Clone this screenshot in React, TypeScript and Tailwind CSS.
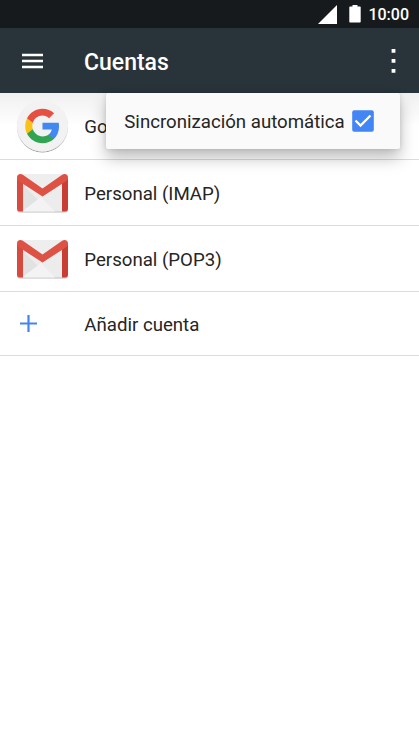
import type { ReactNode } from 'react';

function GoogleIcon() {
  return (
    <svg width="56" height="58" viewBox="0 0 56 58" className="block">
      <defs>
        <filter id="disc" x="-20%" y="-20%" width="140%" height="140%">
          <feDropShadow dx="0" dy="1" stdDeviation="0.7" floodOpacity="0.4" />
        </filter>
      </defs>
      <circle cx="28.5" cy="28.8" r="25.6" fill="#f2f2f2" filter="url(#disc)" />
      <g transform="translate(11.2 11.7) scale(1.44)">
        <path fill="#4387f0" d="M23.5 12.27c0-.85-.08-1.67-.22-2.45H12v4.64h6.45c-.28 1.5-1.13 2.77-2.4 3.62v3.01h3.88c2.27-2.09 3.57-5.17 3.57-8.82z" />
        <path fill="#31a552" d="M12 24c3.24 0 5.95-1.07 7.93-2.91l-3.88-3.01c-1.07.72-2.45 1.15-4.05 1.15-3.12 0-5.77-2.11-6.71-4.95H1.28v3.11C3.25 21.3 7.31 24 12 24z" />
        <path fill="#fbc116" d="M5.29 14.28A7.2 7.2 0 0 1 4.91 12c0-.79.14-1.56.38-2.28V6.61H1.28A12 12 0 0 0 0 12c0 1.94.46 3.77 1.28 5.39z" />
        <path fill="#e65043" d="M12 4.77c1.76 0 3.34.6 4.58 1.79l3.44-3.44C17.94 1.19 15.24 0 12 0 7.31 0 3.25 2.7 1.28 6.61l4.01 3.11C6.23 6.88 8.88 4.77 12 4.77z" />
      </g>
    </svg>
  );
}

function MailIcon() {
  return (
    <svg width="56" height="42" viewBox="0 0 56 42" className="block">
      <rect x="3" y="3" width="51" height="37.6" rx="3" fill="#bdbdbd" />
      <rect x="3" y="2" width="51" height="37.6" rx="3" fill="#ececec" />
      <path d="M8 39.6V12L24 28z" fill="#e2e2e2" />
      <path d="M8 39.6 27 25 41 39.6z" fill="#f3f3f3" />
      <path d="M8 2H49L28.5 17z" fill="#eeeeee" />
      <path d="M3 6v30.6a3 3 0 0 0 3 3h3V11z" fill="#d64a40" />
      <path d="M54 6v30.6a3 3 0 0 1-3 3h-3V11z" fill="#c93e34" />
      <path d="M3 5.5C3 2.2 6.2.9 8.8 2.7L28.5 16.4 48.2 2.7C50.8.9 54 2.2 54 5.5c0 1.7-.7 2.8-2 3.7L28.5 24.6 5 9.2C3.7 8.3 3 7.2 3 5.5z" fill="#de5145" />
    </svg>
  );
}

function PlusIcon() {
  return (
    <svg width="56" height="18" viewBox="0 0 56 18" className="block">
      <path d="M6 8.5h17M14.5 0v17" stroke="#4384f3" strokeWidth="2.2" />
    </svg>
  );
}

type RowProps = { icon: ReactNode; label: string; className: string };

function Row({ icon, label, className }: RowProps) {
  return (
    <div className={`flex items-center border-b border-[#dcdcdc] pl-[14px] ${className}`}>
      <div className="w-[70.3px] shrink-0">{icon}</div>
      <span className="pt-[2px] text-[18.65px] leading-6 whitespace-nowrap text-[#252525]">{label}</span>
    </div>
  );
}

const accounts: RowProps[] = [
  { icon: <GoogleIcon />, label: 'Google', className: 'h-[67px] bg-linear-to-b from-[#f0f0f0] to-white to-50%' },
  { icon: <MailIcon />, label: 'Personal (IMAP)', className: 'h-[66px]' },
  { icon: <MailIcon />, label: 'Personal (POP3)', className: 'h-[66px]' },
  { icon: <PlusIcon />, label: 'Añadir cuenta', className: 'h-[64px]' },
];

export default function App() {
  return (
    <div className="flex h-screen flex-col overflow-hidden bg-white font-['Roboto',sans-serif]">
      <div className="flex h-7 shrink-0 items-center justify-end bg-[#161a1c] pr-[10px] text-white">
        <svg width="19" height="19" viewBox="0 0 19 19" className="mr-[12px]">
          <path d="M19 0V19H0z" fill="currentColor" />
        </svg>
        <svg width="12" height="18" viewBox="0 0 12 18" className="mr-[7px]">
          <path d="M3.5 0h5v1.5H11q.7 0 .7.7v14.6q0 .7-.7.7H1q-.7 0-.7-.7V2.2q0-.7.7-.7h2.5z" fill="currentColor" />
        </svg>
        <span className="pt-[2px] text-[16px] leading-5 font-medium">10:00</span>
      </div>

      <header className="relative z-10 flex h-[65px] shrink-0 items-center bg-[#29343a] pr-[23px] pl-[22px] text-white">
        <svg width="21" height="16" viewBox="0 0 21 16">
          <path d="M0 2h21M0 8h21M0 14h21" stroke="currentColor" strokeWidth="2.3" />
        </svg>
        <h1 className="ml-[41px] flex-1 pt-[4px] text-[23px] leading-7 font-medium">Cuentas</h1>
        <svg width="5" height="24" viewBox="0 0 5 24">
          <path d="M.6 0h3.8v3.8H.6zM.6 10h3.8v3.8H.6zM.6 20h3.8v3.8H.6z" fill="currentColor" />
        </svg>

        {/* Overflow menu */}
        <div className="absolute top-[65px] right-[19px] flex h-[56px] w-[294px] items-center gap-[7px] rounded-[2px] bg-[#fafafa] pl-[18.3px] shadow-[0_9px_16px_rgba(0,0,0,0.26),0_0_5px_rgba(0,0,0,0.12)]">
          <span className="pt-[2px] text-[18.65px] leading-6 whitespace-nowrap text-[#252525]">Sincronización automática</span>
          <svg width="22" height="22" viewBox="0 0 22 22" className="shrink-0">
            <rect x=".2" y=".2" width="21.6" height="21.6" rx="2" fill="#4285f4" />
            <path d="m3.5 10.5 5 5L18.5 5.5" fill="none" stroke="#fff" strokeWidth="2.3" />
          </svg>
        </div>
      </header>

      <main>
        {accounts.map((account) => (
          <Row key={account.label} {...account} />
        ))}
      </main>
    </div>
  );
}
